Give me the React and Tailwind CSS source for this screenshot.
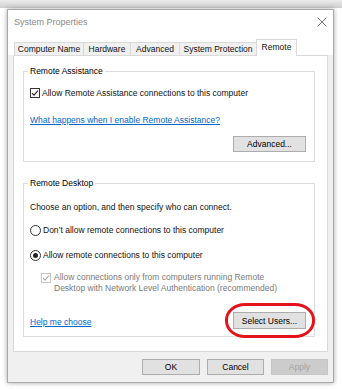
const font = { fontFamily: '"Liberation Sans", Arial, sans-serif' };

function Check({ disabled }) {
  return (
    <span
      className={`flex h-[10px] w-[10px] shrink-0 items-center justify-center border bg-white ${
        disabled ? 'border-[#c4c4c4]' : 'border-[#333]'
      }`}
    >
      <svg width="8" height="8" viewBox="0 0 8 8">
        <path
          d="M1 4.2 L3 6.2 L7 1.6"
          fill="none"
          stroke={disabled ? '#a8a8a8' : '#222'}
          strokeWidth="1.1"
        />
      </svg>
    </span>
  );
}

function Radio({ checked }) {
  return (
    <span className="flex h-[11px] w-[11px] shrink-0 items-center justify-center rounded-full border border-[#333] bg-white">
      {checked && <span className="h-[5px] w-[5px] rounded-full bg-[#222]" />}
    </span>
  );
}

function Btn({ children, className = '', disabled }) {
  return (
    <div
      className={`flex items-center justify-center border ${
        disabled
          ? 'border-[#c6c6c6] bg-[#cccccc] text-[#a3a3a3]'
          : 'border-[#adadad] bg-[#e1e1e1] text-black'
      } ${className}`}
    >
      {children}
    </div>
  );
}

function Group({ label, className = '', children }) {
  return (
    <div className={`relative border border-[#dcdcdc] ${className}`}>
      <span className="absolute -top-[7px] left-[4px] bg-white px-[2px] leading-[12px] text-black">
        {label}
      </span>
      {children}
    </div>
  );
}

const tabs = [
  { name: 'Computer Name', w: 'w-[70px]' },
  { name: 'Hardware', w: 'w-[48px]' },
  { name: 'Advanced', w: 'w-[50px]' },
  { name: 'System Protection', w: 'w-[78px]' },
];

export default function App() {
  return (
    <div className="h-[389px] w-[342px] overflow-hidden bg-white text-[8.5px] leading-[12px] text-[#111]" style={font}>
      <div className="h-[8px] bg-gradient-to-b from-[#ececec] to-[#cfcfcf]" />
      <div className="ml-[7px] mt-[1px] flex h-[374px] w-[327px] flex-col border border-[#a9a9a9] bg-[#f0f0f0] shadow-[0_0_5px_rgba(0,0,0,0.35)]">
        {/* title bar */}
        <div className="flex h-[28px] items-start justify-between bg-white pl-[6px] pr-[6px] pt-[6px]">
          <span className="text-[9px] text-[#8a8a8a]">System Properties</span>
          <svg width="10" height="10" viewBox="0 0 10 10" className="mt-[1px]">
            <path d="M0.5 0.5 L9.5 9.5 M9.5 0.5 L0.5 9.5" stroke="#7a7a7a" strokeWidth="1" />
          </svg>
        </div>

        {/* tabs */}
        <div className="relative z-10 flex h-[17px] items-end bg-white pl-[6px]">
          {tabs.map((t, i) => (
            <div
              key={t.name}
              className={`flex h-[13px] items-center justify-center border-l border-r border-t border-[#d9d9d9] bg-[#f0f0f0] ${t.w} ${
                i > 0 ? '-ml-px' : ''
              }`}
            >
              {t.name}
            </div>
          ))}
          <div className="-mb-px -ml-px flex h-[17px] w-[41px] items-start justify-center border-l border-r border-t border-[#d9d9d9] bg-white pt-[1px]">
            Remote
          </div>
        </div>

        {/* panel */}
        <div className="mx-[5px] flex h-[297px] flex-col border border-[#d9d9d9] bg-white pb-[14px] pl-[9px] pr-[12px] pt-[15px]">
          <Group label="Remote Assistance" className="flex h-[91px] flex-col pb-[9px] pl-[6px] pr-[8px] pt-[15px]">
            <div className="flex h-[12px] items-center gap-[2px]">
              <Check />
              <span>Allow Remote Assistance connections to this computer</span>
            </div>
            <div className="mt-[15px] h-[12px] text-[#0066cc] underline">
              What happens when I enable Remote Assistance?
            </div>
            <div className="mt-[10px] flex justify-end">
              <Btn className="h-[16px] w-[73px]">Advanced...</Btn>
            </div>
          </Group>

          <Group label="Remote Desktop" className="mt-[21px] flex h-[154px] flex-col pb-[7px] pl-[6px] pr-[8px] pt-[17px]">
            <div className="h-[12px]">Choose an option, and then specify who can connect.</div>
            <div className="mt-[11px] flex h-[12px] items-center gap-[2px]">
              <Radio />
              <span>Don’t allow remote connections to this computer</span>
            </div>
            <div className="mt-[13px] flex h-[12px] items-center gap-[2px]">
              <Radio checked />
              <span>Allow remote connections to this computer</span>
            </div>
            <div className="mt-[11px] flex gap-[3px] pl-[11px]">
              <div className="mt-[1px]">
                <Check disabled />
              </div>
              <div className="leading-[11px] text-[#7a7a7a]">
                Allow connections only from computers running Remote
                <br />
                Desktop with Network Level Authentication (recommended)
              </div>
            </div>
            <div className="mt-[18px] flex h-[17px] items-center justify-between">
              <span className="pt-[3px] text-[#0066cc] underline">Help me choose</span>
              <Btn className="h-[17px] w-[73px]">Select Users...</Btn>
            </div>
            <div className="absolute left-[201px] top-[119px] h-[35px] w-[90px] rounded-[20px/17px] border-[3px] border-[#e3121b]" />
          </Group>
        </div>

        {/* bottom buttons */}
        <div className="mt-[7px] flex justify-end gap-[7px] pr-[5px]">
          <Btn className="h-[16px] w-[58px]">OK</Btn>
          <Btn className="h-[16px] w-[57px]">Cancel</Btn>
          <Btn className="h-[16px] w-[57px]" disabled>
            Apply
          </Btn>
        </div>
      </div>
    </div>
  );
}
